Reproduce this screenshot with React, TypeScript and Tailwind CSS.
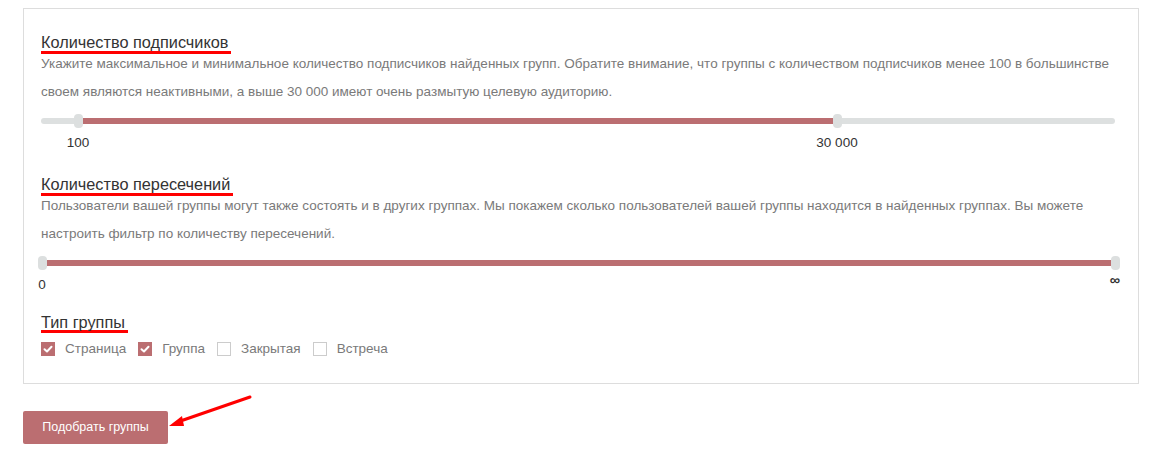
import React from "react";

const font = "font-['Liberation_Sans',Arial,sans-serif]";

function Check() {
  return (
    <svg width="14" height="14" viewBox="0 0 14 14">
      <polyline points="3.5,7.2 6,9.5 10.5,4.8" fill="none" stroke="#ffffff" strokeWidth="2" strokeLinecap="round" strokeLinejoin="round" />
    </svg>
  );
}

function Slider({ a, b, la, lb, bLabelClass }: { a: number; b: number; la: string; lb: string; bLabelClass?: string }) {
  return (
    <div className="w-[1074px]">
      <div className="relative mt-[8px] h-[14px]">
        <div className="absolute left-0 right-0 top-[4px] h-[6px] rounded-[3px] bg-[#dde0e0]" />
        <div className="absolute top-[4px] h-[6px] bg-[#bb6e71]" style={{ left: a, width: b - a }} />
        <div className="absolute top-0 h-[14px] w-[9px] rounded-[4px] bg-[#dcdfdf]" style={{ left: a - 4.5 }} />
        <div className="absolute top-0 h-[14px] w-[9px] rounded-[4px] bg-[#dcdfdf]" style={{ left: b - 4.5 }} />
      </div>
      <div className="relative mt-[7px] h-[16px] text-[13.5px] leading-[16px] text-[#333]">
        <span className="absolute -translate-x-1/2" style={{ left: a }}>{la}</span>
        <span className={"absolute -translate-x-1/2 " + (bLabelClass ?? "")} style={{ left: b }}>{lb}</span>
      </div>
    </div>
  );
}

function Box({ checked, label }: { checked: boolean; label: string }) {
  return (
    <div className="flex items-center">
      {checked ? (
        <div className="flex h-[14px] w-[14px] items-center justify-center bg-[#bb6e71]">
          <Check />
        </div>
      ) : (
        <div className="h-[14px] w-[14px] border border-[#cccccc] bg-white" />
      )}
      <span className="ml-[10px] text-[13.5px] text-[#7a7a7a]">{label}</span>
    </div>
  );
}

export default function App() {
  return (
    <div className={`${font} relative h-[457px] w-[1173px] overflow-hidden bg-white pl-[23px] pt-[8px]`}>
      <div className="w-[1116px] border border-[#dddddd] pb-[25px] pl-[17px] pr-[22px] pt-[22px]">
        <div className="inline-block border-b-[3px] border-[#ff0000] pr-[3px] text-[16.3px] leading-[17px] text-[#333]">
          Количество подписчиков
        </div>
        <p className="-mt-[5px] text-[13.5px] leading-[28px] text-[#7a7a7a]">
          Укажите максимальное и минимальное количество подписчиков найденных групп. Обратите внимание, что группы с количеством подписчиков менее 100 в большинстве своем являются неактивными, а выше 30 000 имеют очень размытую целевую аудиторию.
        </p>
        <Slider a={37} b={796} la="100" lb="30 000" />

        <div className="mt-[25px] inline-block border-b-[3px] border-[#ff0000] pr-[3px] text-[16.3px] leading-[17px] text-[#333]">
          Количество пересечений
        </div>
        <p className="-mt-[5px] text-[13.5px] leading-[28px] text-[#7a7a7a]">
          Пользователи вашей группы могут также состоять и в других группах. Мы покажем сколько пользователей вашей группы находится в найденных группах. Вы можете настроить фильтр по количеству пересечений.
        </p>
        <Slider a={1} b={1074} la="0" lb="∞" bLabelClass="-mt-[5px] font-bold text-[14.5px]" />

        <div className="mt-[22px] inline-block border-b-[3px] border-[#ff0000] pr-[3px] text-[16.3px] leading-[15px] text-[#333]">
          Тип группы
        </div>
        <div className="mt-[5px] flex h-[18px] items-center gap-[12px]">
          <Box checked label="Страница" />
          <Box checked label="Группа" />
          <Box checked={false} label="Закрытая" />
          <Box checked={false} label="Встреча" />
        </div>
      </div>

      <button className="mt-[27px] h-[33px] w-[145px] rounded-[2px] bg-[#bb6e71] text-[12.5px] text-white">
        Подобрать группы
      </button>

      <svg className="absolute left-0 top-0" width="1173" height="457" viewBox="0 0 1173 457">
        <line x1="250" y1="397" x2="179" y2="421.5" stroke="#ff0000" strokeWidth="3" strokeLinecap="round" />
        <polygon points="169,426 182,416 184,426" fill="#ff0000" />
      </svg>
    </div>
  );
}
